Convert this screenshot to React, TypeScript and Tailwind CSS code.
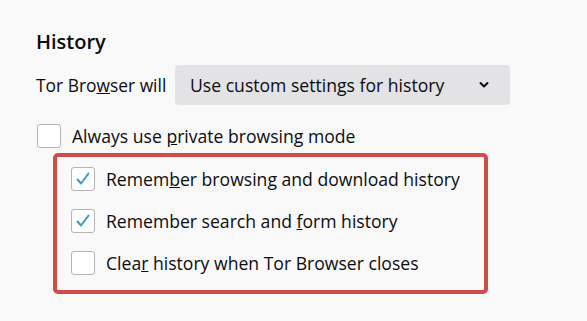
import React from 'react';

function Check({ checked }: { checked?: boolean }) {
  return (
    <span className="w-[24px] h-[24px] shrink-0 rounded-[3px] border border-[#b4b4bb] bg-white flex items-center justify-center">
      {checked && (
        <svg width="16" height="16" viewBox="0 0 16 16" fill="none">
          <path d="M2.5 8.5 L6 12.5 L13.5 2.5" stroke="#3c9bc4" strokeWidth="2" strokeLinecap="round" strokeLinejoin="round" />
        </svg>
      )}
    </span>
  );
}

function Row({ checked, children }: { checked?: boolean; children: React.ReactNode }) {
  return (
    <label className="flex items-center gap-[11px] h-[24px]">
      <Check checked={checked} />
      <span>{children}</span>
    </label>
  );
}

export default function App() {
  return (
    <div
      className="w-[587px] h-[321px] bg-[#f9f9fa] text-[#0c0c0d] text-[17.6px] pl-[36px] pt-[29px] overflow-hidden"
      style={{ fontFamily: '"Open Sans", "Noto Sans", sans-serif' }}
    >
      <h2 className="text-[20px] font-semibold leading-[26px]">History</h2>
      <div className="flex items-center mt-[10px] h-[40px]">
        <span className="w-[129px] whitespace-nowrap text-[17.4px]">Tor Bro<u>w</u>ser will</span>
        <div className="ml-[10px] w-[335px] h-[40px] rounded-[4px] bg-[#e3e3e6] flex items-center justify-between pl-[15px] pr-[21px]">
          <span>Use custom settings for history</span>
          <svg width="10" height="8" viewBox="0 0 10 8">
            <path d="M1.5 2 L5 5.5 L8.5 2" stroke="#0c0c0d" strokeWidth="2" fill="none" strokeLinecap="round" strokeLinejoin="round" />
          </svg>
        </div>
      </div>
      <div className="mt-[19px] ml-[1px]">
        <Row>Always use <u>p</u>rivate browsing mode</Row>
      </div>
      <div className="mt-[5px] ml-[17px] w-[435px] h-[141px] border-[4px] border-[#d24b4b] rounded-[5px] pl-[14px] pt-[10px] flex flex-col gap-[18px]">
        <Row checked>Remem<u>b</u>er browsing and download history</Row>
        <Row checked>Remember search and <u>f</u>orm history</Row>
        <Row>Clea<u>r</u> history when Tor Browser closes</Row>
      </div>
    </div>
  );
}
